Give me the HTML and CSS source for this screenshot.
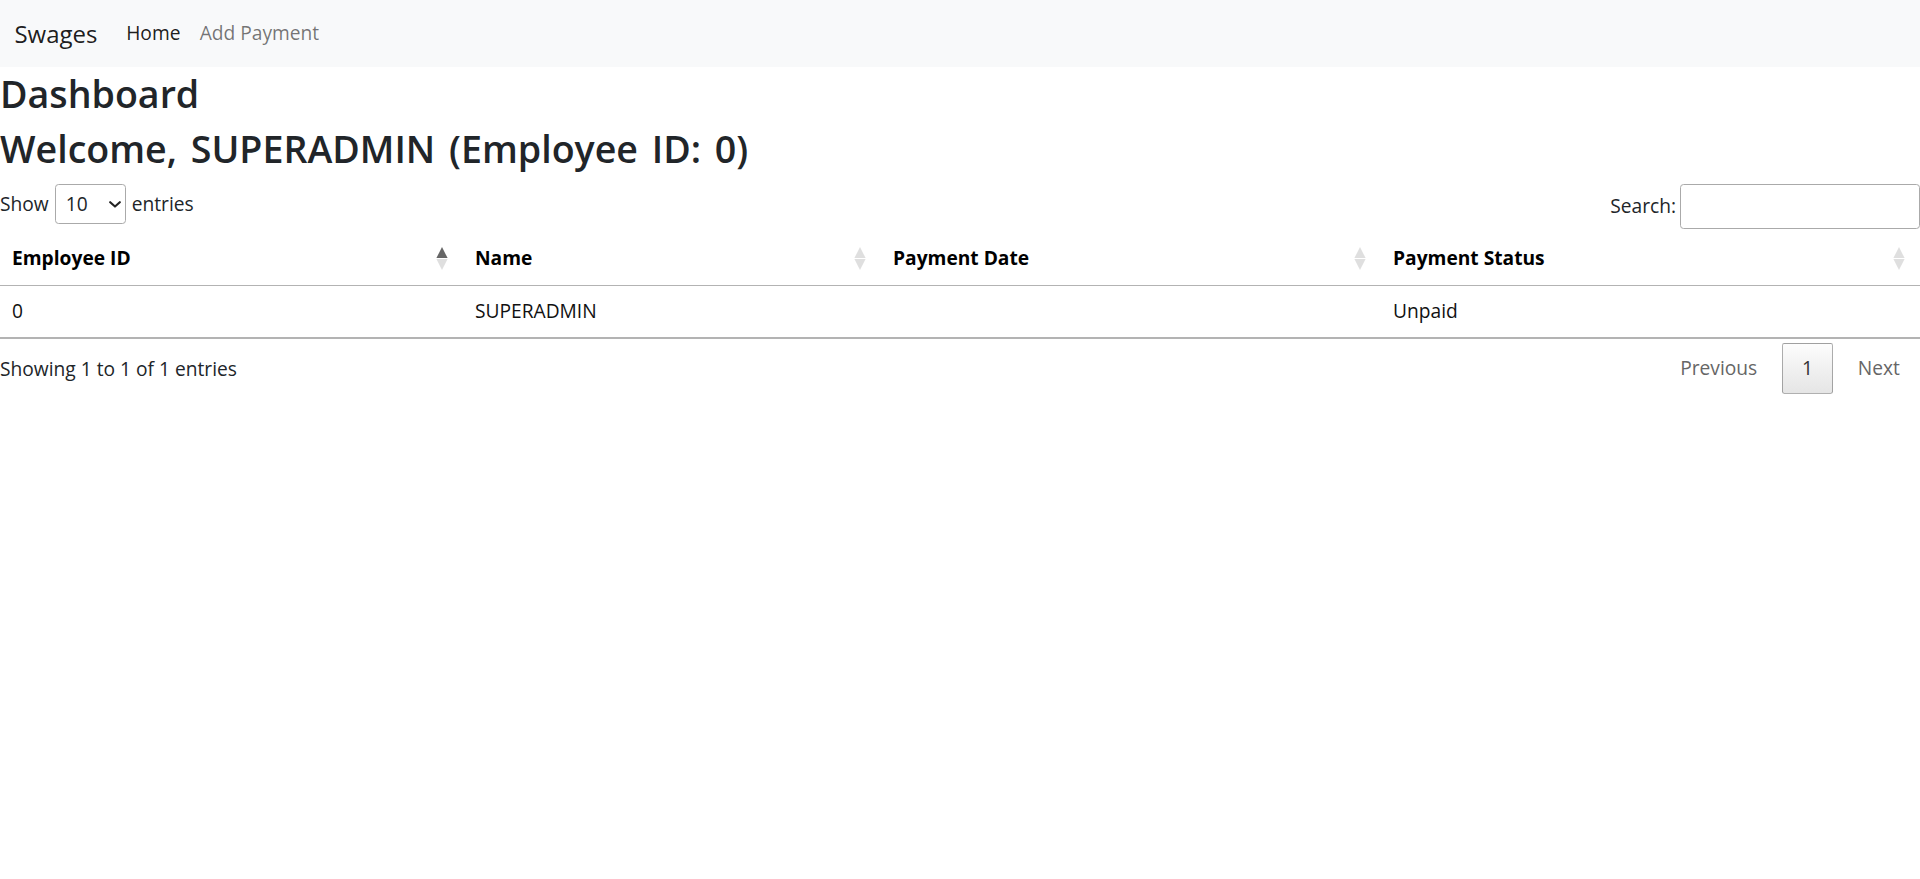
FILE: index.html
```html
<!DOCTYPE html>
<html lang="en">
<head>
<meta charset="utf-8">
<title>Swages - Dashboard</title>
<link rel="stylesheet" href="styles.css">
</head>
<body>
<nav class="navbar">
  <div class="navbar-inner">
    <a class="brand" href="#">Swages</a>
    <ul class="nav">
      <li><a class="nav-link active" href="#">Home</a></li>
      <li><a class="nav-link" href="#">Add Payment</a></li>
    </ul>
  </div>
</nav>
<main class="page">
  <h2 class="title">Dashboard</h2>
  <h2 class="title">Welcome, SUPERADMIN (Employee ID: 0)</h2>
  <div class="dt-wrapper">
    <div class="dt-controls">
      <label class="dt-length">
        <span>Show</span>
        <span class="select-wrap">
          <select class="dt-select">
            <option>10</option>
            <option>25</option>
            <option>50</option>
            <option>100</option>
          </select>
          <svg class="chev" width="12" height="7" viewBox="0 0 12 7"><path d="M1.2 1.2 L6 5.6 L10.8 1.2" fill="none" stroke="#222" stroke-width="2.1" stroke-linecap="round" stroke-linejoin="round"/></svg>
        </span>
        <span>entries</span>
      </label>
      <label class="dt-filter">
        <span>Search:</span>
        <input class="dt-search" type="search">
      </label>
    </div>
    <table class="dt-table">
      <thead>
        <tr>
          <th class="col-id"><div class="th-inner"><span>Employee ID</span><svg class="sort" width="12" height="23" viewBox="0 0 12 23"><polygon class="asc on" points="6,0 11.6,11.1 0.4,11.1"/><polygon class="desc" points="0.4,11.9 11.6,11.9 6,23"/></svg></div></th>
          <th class="col-name"><div class="th-inner"><span>Name</span><svg class="sort" width="12" height="23" viewBox="0 0 12 23"><polygon class="asc" points="6,0 11.6,11.1 0.4,11.1"/><polygon class="desc" points="0.4,11.9 11.6,11.9 6,23"/></svg></div></th>
          <th class="col-date"><div class="th-inner"><span>Payment Date</span><svg class="sort" width="12" height="23" viewBox="0 0 12 23"><polygon class="asc" points="6,0 11.6,11.1 0.4,11.1"/><polygon class="desc" points="0.4,11.9 11.6,11.9 6,23"/></svg></div></th>
          <th class="col-status"><div class="th-inner"><span>Payment Status</span><svg class="sort" width="12" height="23" viewBox="0 0 12 23"><polygon class="asc" points="6,0 11.6,11.1 0.4,11.1"/><polygon class="desc" points="0.4,11.9 11.6,11.9 6,23"/></svg></div></th>
        </tr>
      </thead>
      <tbody>
        <tr>
          <td>0</td>
          <td>SUPERADMIN</td>
          <td></td>
          <td>Unpaid</td>
        </tr>
      </tbody>
    </table>
    <div class="dt-footer">
      <div class="dt-info">Showing 1 to 1 of 1 entries</div>
      <div class="dt-paginate">
        <a class="pg disabled">Previous</a>
        <a class="pg current">1</a>
        <a class="pg disabled">Next</a>
      </div>
    </div>
  </div>
</main>
</body>
</html>
```

FILE: styles.css
```css
*, *::before, *::after {
  box-sizing: border-box;
}

html, body {
  margin: 0;
  padding: 0;
}

body {
  font-family: "Open Sans", "Noto Sans", "Liberation Sans", sans-serif;
  font-size: 19.2px;
  line-height: 28.8px;
  color: #212529;
  background: #fff;
}

a {
  text-decoration: none;
}

/* Navbar */
.navbar {
  background: #f8f9fa;
  padding: 9.6px 14.4px;
}

.navbar-inner {
  display: flex;
  align-items: center;
}

.brand {
  font-size: 24px;
  line-height: 36px;
  padding: 6px 0;
  margin-right: 19.2px;
  color: rgba(0, 0, 0, 0.9);
}

.nav {
  display: flex;
  list-style: none;
  margin: 0;
  padding: 0;
}

.nav-link {
  display: block;
  padding: 9.6px 9.6px;
  color: rgba(0, 0, 0, 0.55);
}

.nav-link.active {
  color: rgba(0, 0, 0, 0.9);
}

/* Headings */
.page {
  padding-top: 3.5px;
}

.title {
  margin: 0 0 9.6px;
  font-size: 37.6px;
  line-height: 46.08px;
  font-weight: 600;
  word-spacing: 4px;
  color: #212529;
}

/* DataTables */
.dt-controls {
  display: flex;
  justify-content: space-between;
  align-items: flex-start;
  padding-top: 2px;
}

.dt-length,
.dt-filter {
  display: flex;
  align-items: center;
}

.dt-length {
  gap: 6px;
}

.dt-filter {
  gap: 4px;
}

.select-wrap {
  position: relative;
  display: inline-flex;
}

.dt-select {
  appearance: none;
  -webkit-appearance: none;
  width: 71px;
  height: 40px;
  border: 1px solid #aaa;
  border-radius: 3.6px;
  background: transparent;
  color: inherit;
  font: inherit;
  padding: 0 0 0 10px;
}

.chev {
  position: absolute;
  right: 5px;
  top: 17px;
  pointer-events: none;
}

.dt-search {
  width: 240px;
  height: 44.7px;
  border: 1px solid #aaa;
  border-radius: 3.6px;
  background: transparent;
  font: inherit;
  padding: 6px;
}

.dt-table {
  width: 100%;
  table-layout: fixed;
  border-collapse: separate;
  border-spacing: 0;
  margin-top: 3px;
  border-bottom: 2px solid #b3b3b3;
}

.dt-table th {
  text-align: left;
  font-weight: bold;
  color: #000;
  padding: 12px 15px 12px 12px;
  border-bottom: 1px solid #b3b3b3;
}

.dt-table td {
  padding: 11.5px 12px 11.3px;
  color: #111;
}

.col-id { width: 463px; }
.col-name { width: 418px; }
.col-date { width: 500px; }
.col-status { width: 539px; }

.col-name,
.col-date { padding-right: 14.5px; }

.col-status { padding-right: 15px; }

.th-inner {
  display: flex;
  align-items: center;
  justify-content: space-between;
}

.sort {
  flex: none;
  display: block;
}

.sort polygon {
  fill: #dfdfdf;
}

.sort polygon.on {
  fill: #666;
}

.dt-footer {
  display: flex;
  justify-content: space-between;
  align-items: flex-start;
}

.dt-info {
  padding-top: 15.5px;
}

.dt-paginate {
  display: flex;
  gap: 4.4px;
  padding-top: 3.4px;
}

.pg {
  display: block;
  padding: 10.6px 19.2px;
  min-width: 28.8px;
  text-align: center;
  border: 1px solid transparent;
  border-radius: 2.4px;
  color: #666;
  cursor: default;
}

.pg.current {
  color: #333;
  border: 1px solid rgba(0, 0, 0, 0.3);
  background: linear-gradient(to bottom, rgba(230, 230, 230, 0.1) 0%, rgba(0, 0, 0, 0.1) 100%);
}
```
